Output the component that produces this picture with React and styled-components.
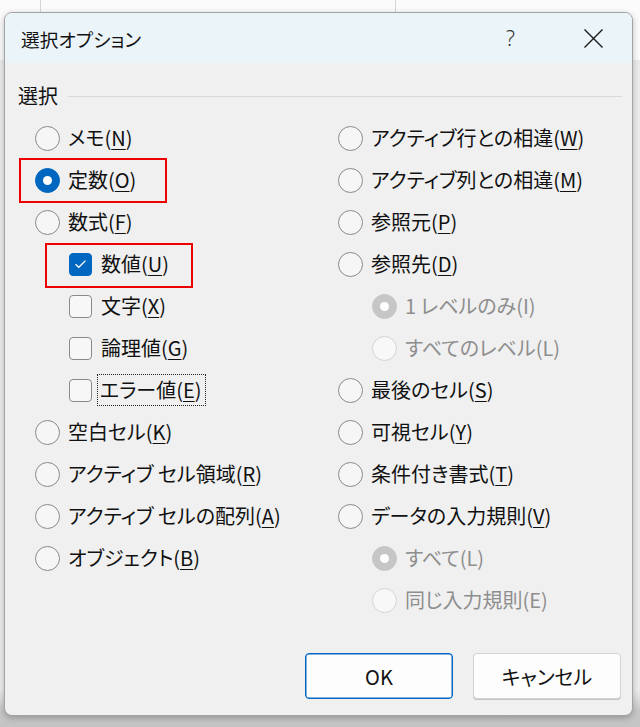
import React from "react";
import styled, { createGlobalStyle } from "styled-components";

const Global = createGlobalStyle`
  html, body { margin: 0; padding: 0; height: 727px; overflow: hidden; }
  body { font-family: "Noto Sans CJK JP", "Noto Sans", sans-serif; }
  #root { height: 727px; }
`;

const Backdrop = styled.div`
  box-sizing: border-box;
  height: 727px;
  padding: 12px 7px 11px 4px;
  display: flex;
  background:
    linear-gradient(to right, transparent 40px, #d6d6d6 40px, #d6d6d6 41px, transparent 41px) top left / 100% 12px no-repeat,
    linear-gradient(to right, transparent 395px, #d6d6d6 395px, #d6d6d6 396px, transparent 396px) top left / 100% 12px no-repeat,
    linear-gradient(to bottom, #fbfbfb 0, #fbfbfb 60px, #ececec 60px, #ececec 690px, #c6c6c6 712px, #c4c4c4 100%);
`;

const Dialog = styled.div`
  flex: 1;
  display: flex;
  flex-direction: column;
  background: #f0f0f0;
  border: 1px solid #a4a4a4;
  border-radius: 8px;
  overflow: hidden;
  box-shadow: 0 2px 6px rgba(0, 0, 0, 0.25);
  font-feature-settings: "palt";
  color: #111;
`;

const TitleBar = styled.div`
  height: 50px;
  flex: none;
  display: flex;
  align-items: center;
  background: #ebf4f8;
  padding: 0 28px 0 16px;
`;

const Title = styled.div`
  flex: 1;
  font-size: 18.6px;
  letter-spacing: 0.2px;
  color: #111;
`;

const HelpMark = styled.span`
  font-family: "Noto Sans", sans-serif;
  font-size: 21px;
  font-weight: 300;
  color: #333;
  margin-right: 68px;
`;

const CloseBtn = styled.svg`
  width: 21px;
  height: 21px;
  display: block;
`;

const Body = styled.div`
  flex: 1;
  display: flex;
  flex-direction: column;
  padding: 17px 10px 16px 13px;
`;

const GroupHeader = styled.div`
  height: 30px;
  display: flex;
  align-items: center;
  gap: 10px;
  font-size: 20px;
`;

const GroupLine = styled.div`
  flex: 1;
  height: 1px;
  background: #d9d9d9;
  margin-top: 2px;
`;

const Columns = styled.div`
  display: grid;
  grid-template-columns: 303px 1fr;
  margin-top: 7px;
  padding-left: 17px;
`;

const Column = styled.div`
  display: flex;
  flex-direction: column;
`;

const Row = styled.div`
  height: 42px;
  display: flex;
  align-items: center;
  padding-left: ${(p) => (p.$indent ? 34 : 0)}px;
`;

const Control = styled.div`
  position: relative;
  display: inline-flex;
  align-items: center;
  gap: ${(p) => (p.$check ? 9 : 8)}px;
  height: 42px;
`;

const Mark = styled.div`
  position: absolute;
  width: 148px;
  height: 45px;
  box-sizing: border-box;
  border: 2px solid #ec0000;
  left: ${(p) => p.$left}px;
  top: ${(p) => p.$top}px;
  pointer-events: none;
`;

const RadioCircle = styled.span`
  box-sizing: border-box;
  width: 25px;
  height: 25px;
  border-radius: 50%;
  flex: none;
  display: flex;
  align-items: center;
  justify-content: center;
  border: 1px solid
    ${(p) => (p.$checked ? (p.$disabled ? "#c6c6c6" : "#0067c0") : p.$disabled ? "#d4d4d4" : "#8a8a8a")};
  background: ${(p) =>
    p.$checked ? (p.$disabled ? "#c6c6c6" : "#0067c0") : p.$disabled ? "#f8f8f8" : "#f6f6f6"};
  &::after {
    content: "";
    display: ${(p) => (p.$checked ? "block" : "none")};
    width: 9px;
    height: 9px;
    border-radius: 50%;
    background: #fff;
  }
`;

const CheckBox = styled.span`
  box-sizing: border-box;
  width: 23px;
  height: 23px;
  border-radius: 4px;
  flex: none;
  display: flex;
  align-items: center;
  justify-content: center;
  border: 1px solid ${(p) => (p.$checked ? "#0067c0" : "#8a8a8a")};
  background: ${(p) => (p.$checked ? "#0067c0" : "#f7f7f7")};
`;

const Label = styled.span`
  font-size: 20px;
  line-height: 30px;
  white-space: nowrap;
  color: ${(p) => (p.$disabled ? "#8e8e8e" : "#111")};
  ${(p) =>
    p.$focus
      ? `outline: 1px dotted #222; outline-offset: 0; padding: 0 3px 0 2px; margin-left: -3px;`
      : ""}
  u {
    text-decoration-thickness: 1px;
    text-underline-offset: 3px;
  }
`;

const Footer = styled.div`
  margin-top: 32px;
  display: flex;
  justify-content: flex-end;
  gap: 20px;
  padding-right: 1px;
`;

const Button = styled.button`
  width: 148px;
  height: 46px;
  border-radius: 4px;
  background: #fdfdfd;
  border: 1px solid ${(p) => (p.$primary ? "#0067c0" : "#d3d3d3")};
  box-shadow: ${(p) => (p.$primary ? "inset 0 0 0 0.5px #0067c0" : "0 1px 0 #c4c4c4")};
  font-family: "Noto Sans CJK JP", "Noto Sans", sans-serif;
  font-feature-settings: "palt";
  font-size: 20px;
  color: #111;
  padding: 0;
`;

function Radio({ label, mn, after, checked, disabled, indent, mark, focus }) {
  return (
    <Row $indent={indent}>
      <Control>
        {mark && <Mark $left={-16} $top={-1} />}
        <RadioCircle $checked={checked} $disabled={disabled} />
        <Label $disabled={disabled} $focus={focus}>
          {label}(
          {mn ? <u>{mn}</u> : null}
          {after}
          )
        </Label>
      </Control>
    </Row>
  );
}

function Check({ label, mn, checked, mark, focus }) {
  return (
    <Row $indent>
      <Control $check>
        {mark && <Mark $left={-24} $top={0} />}
        <CheckBox $checked={checked}>
          {checked && (
            <svg width="13" height="10" viewBox="0 0 13 10">
              <path d="M1.5 5.2 L4.8 8.3 L11.5 1.6" fill="none" stroke="#fff" strokeWidth="1.3" />
            </svg>
          )}
        </CheckBox>
        <Label $focus={focus}>
          {label}(<u>{mn}</u>)
        </Label>
      </Control>
    </Row>
  );
}

export default function App() {
  return (
    <>
      <Global />
      <Backdrop>
        <Dialog>
          <TitleBar>
            <Title>選択オプション</Title>
            <HelpMark>?</HelpMark>
            <CloseBtn viewBox="0 0 21 21">
              <path d="M1.5 1.5 L19.5 19.5 M19.5 1.5 L1.5 19.5" stroke="#1b1b1b" strokeWidth="1.4" fill="none" />
            </CloseBtn>
          </TitleBar>
          <Body>
            <GroupHeader>
              選択
              <GroupLine />
            </GroupHeader>
            <Columns>
              <Column>
                <Radio label="メモ" mn="N" />
                <Radio label="定数" mn="O" checked mark />
                <Radio label="数式" mn="F" />
                <Check label="数値" mn="U" checked mark />
                <Check label="文字" mn="X" />
                <Check label="論理値" mn="G" />
                <Check label="エラー値" mn="E" focus />
                <Radio label="空白セル" mn="K" />
                <Radio label="アクティブ セル領域" mn="R" />
                <Radio label="アクティブ セルの配列" mn="A" />
                <Radio label="オブジェクト" mn="B" />
              </Column>
              <Column>
                <Radio label="アクティブ行との相違" mn="W" />
                <Radio label="アクティブ列との相違" mn="M" />
                <Radio label="参照元" mn="P" />
                <Radio label="参照先" mn="D" />
                <Radio label="1 レベルのみ" after="I" indent checked disabled />
                <Radio label="すべてのレベル" after="L" indent disabled />
                <Radio label="最後のセル" mn="S" />
                <Radio label="可視セル" mn="Y" />
                <Radio label="条件付き書式" mn="T" />
                <Radio label="データの入力規則" mn="V" />
                <Radio label="すべて" after="L" indent checked disabled />
                <Radio label="同じ入力規則" after="E" indent disabled />
              </Column>
            </Columns>
            <Footer>
              <Button $primary>OK</Button>
              <Button>キャンセル</Button>
            </Footer>
          </Body>
        </Dialog>
      </Backdrop>
    </>
  );
}
